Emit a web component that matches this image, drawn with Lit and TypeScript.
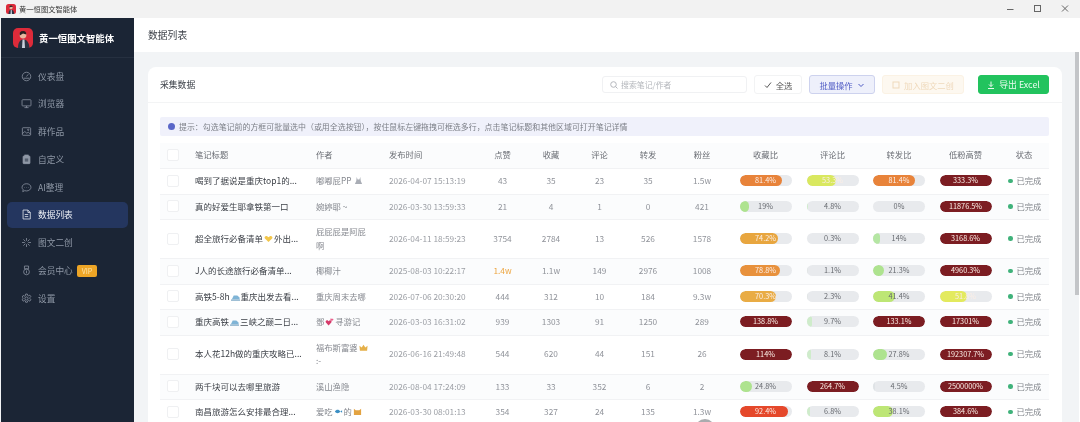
import { LitElement, css, html, svg } from 'lit'
import { customElement } from 'lit/decorators.js'

const ICONS: Record<string, unknown> = {
  gauge: svg`<circle cx="8" cy="8" r="6.2"/><path d="M8 8l2.6-3.2M3.6 10.5h8.8"/>`,
  monitor: svg`<rect x="1.5" y="2.5" width="13" height="9" rx="1"/><path d="M8 11.5v2.5M5 14h6"/>`,
  image: svg`<rect x="2" y="2.5" width="12" height="11" rx="1"/><circle cx="10.5" cy="5.5" r="1"/><path d="M2 11l3.5-3 3 2.500 2-1.500 3.500 3"/>`,
  clip: svg`<rect x="3" y="3" width="10" height="11" rx="1" fill="currentColor"/><rect x="5.500" y="1.500" width="5" height="3" fill="currentColor"/><path d="M5.500 7.500h5M5.500 10h5" stroke="#1b2535"/>`,
  chat: svg`<path d="M8 2.500c3.600 0 6.500 2.300 6.500 5.200S11.600 13 8 13c-.9 0-1.800-.1-2.600-.4L2.500 14l.7-2.800C2 10.200 1.500 9 1.500 7.700 1.500 4.800 4.400 2.500 8 2.500z"/><path d="M5 8h.6M8 8h.6M11 8h.6"/>`,
  doc: svg`<path d="M3 1.500h7l3.500 3.500v9.500H3z"/><path d="M10 1.500V5h3.500M5.500 8h5M5.500 11h5"/>`,
  spark: svg`<path d="M8 1.500v4M8 10.500v4M1.500 8h4M10.500 8h4M3.500 3.500l2.800 2.800M9.700 9.700l2.800 2.800M12.500 3.500L9.700 6.300M6.300 9.700l-2.800 2.800"/>`,
  medal: svg`<path d="M5 1.500h6v4H5z"/><circle cx="8" cy="10" r="4.200"/><path d="M8 8v4"/>`,
  gear: svg`<circle cx="8" cy="8" r="2.300"/><path d="M6.800 1.500h2.400l.4 1.900 1.500.7 1.700-1 1.500 2.200-1.300 1.300v1.800l1.300 1.300-1.500 2.200-1.700-1-1.500.7-.4 1.900H6.800l-.4-1.900-1.500-.7-1.700 1-1.500-2.200 1.300-1.300V7.100L1.700 5.800l1.500-2.200 1.700 1 1.500-.7z"/>`,
}

const NAV = [
  { icon: 'gauge', label: '仪表盘' },
  { icon: 'monitor', label: '浏览器' },
  { icon: 'image', label: '群作品' },
  { icon: 'clip', label: '自定义' },
  { icon: 'chat', label: 'AI整理' },
  { icon: 'doc', label: '数据列表', active: true },
  { icon: 'spark', label: '图文二创' },
  { icon: 'medal', label: '会员中心', vip: true },
  { icon: 'gear', label: '设置' },
]

const emoji = (kind: string) => {
  const shapes: Record<string, unknown> = {
    heart: svg`<path d="M5 9L1 5c-1.200-1.500.8-3.800 2.500-2.500L5 3.500l1.500-1C8.200 1.200 10.200 3.500 9 5z" fill="#f2c64b"/>`,
    pink: svg`<path d="M4 9.500L1 6C0 4.600 1.800 2.800 3.300 4L4 4.700 5 4c1.500-1 3 .8 2 2z" fill="#d63a6a"/><path d="M7.500 4.500L6 3c-.5-.8.600-1.600 1.300-1l.4.300.4-.3c.8-.5 1.600.5 1.100 1.200z" fill="#e8608c"/>`,
    train: svg`<path d="M1 8l2-4h4l2.500 2v2z" fill="#7fb4d6"/><path d="M0 9h10" stroke="#4b88b0"/>`,
    crown: svg`<path d="M1 8.500L.5 3l2.500 2L5 2l2 3 2.500-2L9 8.500z" fill="#e5b04a"/>`,
    fish: svg`<path d="M1 5c1.500-2.500 4.500-2.500 6 0l2-1.500v3L7 5c-1.500 2.500-4.500 2.500-6 0z" fill="#3b8fc4"/>`,
    cat: svg`<path d="M1 2l2 1.500h4L9 2v7H1z" fill="#e3a341"/>`,
    bunny: svg`<path d="M3 1l1 3h2l1-3 .5 4.500L9 9H1l1.500-3.500z" fill="#a9adb5"/>`,
  }
  return html`<svg class="emoji" viewBox="0 0 10 10">${shapes[kind]}</svg>`
}

type Bar = [string, number, string?]

const GREEN = '#aee38f'
const PALE = '#cfeccb'
const LIME = '#bde675'
const RED = '#7c1d22'

const ROWS = [
  { title: html`喝到了据说是重庆top1的...`, author: html`嘟嘟屁PP ${emoji('bunny')}`, time: '2026-04-07 15:13:19', nums: ['43', '35', '23', '35', '1.5w'],
    bars: [['81.4%', 81.4, '#e8833a'], ['53.3%', 57, '#d9e85f'], ['81.4%', 81.4, '#e8833a'], ['333.3%', 100, RED]] as Bar[] },
  { title: html`真的好爱生耶拿铁第一口`, author: html`婉婷耶 ~`, time: '2026-03-30 13:59:33', nums: ['21', '4', '1', '0', '421'],
    bars: [['19%', 19, GREEN], ['4.8%', 3, PALE], ['0%', 0], ['11876.5%', 100, RED]] as Bar[] },
  { title: html`超全旅行必备清单${emoji('heart')}外出...`, author: html`屁屁屁是阿屁啊`, time: '2026-04-11 18:59:23', nums: ['3754', '2784', '13', '526', '1578'],
    bars: [['74.2%', 74.2, '#e8a63f'], ['0.3%', 0], ['14%', 14, '#b5e6a3'], ['3168.6%', 100, RED]] as Bar[] },
  { title: html`J人的长途旅行必备清单...`, author: html`椰椰汁`, time: '2025-08-03 10:22:17', nums: ['1.4w', '1.1w', '149', '2976', '1008'], hot: true,
    bars: [['78.8%', 78.8, '#e8913c'], ['1.1%', 1, '#e2e6e6'], ['21.3%', 21.3, GREEN], ['4960.3%', 100, RED]] as Bar[] },
  { title: html`高铁5-8h${emoji('train')}重庆出发去看...`, author: html`重庆周末去哪`, time: '2026-07-06 20:30:20', nums: ['444', '312', '10', '184', '9.3w'],
    bars: [['70.3%', 70.3, '#e9ac45'], ['2.3%', 2, '#e2e6e6'], ['41.4%', 41.4, LIME], ['51.8%', 52, '#e3ea5e']] as Bar[] },
  { title: html`重庆高铁${emoji('train')}三峡之巅二日...`, author: html`鄧${emoji('pink')}寻游记`, time: '2026-03-03 16:31:02', nums: ['939', '1303', '91', '1250', '289'],
    bars: [['138.8%', 100, RED], ['9.7%', 9.7, PALE], ['133.1%', 100, RED], ['17301%', 100, RED]] as Bar[] },
  { title: html`本人花12h做的重庆攻略已...`, author: html`福布斯富婆${emoji('crown')}<br />:-`, time: '2026-06-16 21:49:48', nums: ['544', '620', '44', '151', '26'],
    bars: [['114%', 100, RED], ['8.1%', 8.1, PALE], ['27.8%', 27.8, GREEN], ['192307.7%', 100, RED]] as Bar[] },
  { title: html`两千块可以去哪里旅游`, author: html`溪山渔隐`, time: '2026-08-04 17:24:09', nums: ['133', '33', '352', '6', '2'],
    bars: [['24.8%', 24.8, GREEN], ['264.7%', 100, RED], ['4.5%', 3, '#dfe3e6'], ['2500000%', 100, RED]] as Bar[] },
  { title: html`南昌旅游怎么安排最合理...`, author: html`爱吃${emoji('fish')}的${emoji('cat')}`, time: '2026-03-30 08:01:13', nums: ['354', '327', '24', '135', '1.3w'],
    bars: [['92.4%', 92.4, '#e5482b'], ['6.8%', 6.8, PALE], ['38.1%', 38.1, LIME], ['384.6%', 100, RED]] as Bar[] },
]

const HEADS = ['点赞', '收藏', '评论', '转发', '粉丝', '收藏比', '评论比', '转发比', '低粉高赞']

@customElement('app-root')
export class AppRoot extends LitElement {
  static styles = css`
    :host {
      display: block;
      width: 1080px;
      height: 422px;
      overflow: hidden;
      position: relative;
      font-family: 'Noto Sans CJK SC', 'Noto Sans', sans-serif;
      background: #f2f4f6;
      /* the reference is a soft, upscaled capture */
      filter: blur(0.35px);
      --cols: 27px 121px 73px 97px 49px 48px 49px 48px 60px 67px 67px 66px 67px 50px;
    }

    .titlebar {
      height: 18px;
      background: #f2f2f2;
      display: flex;
      align-items: center;
      padding: 0 0 0 6px;
      font-size: 7.300px;
      color: #333;
      gap: 3px;
    }
    .titlebar svg.tlogo {
      width: 10px;
      height: 10px;
    }
    .winbtns {
      margin-left: auto;
      display: flex;
    }
    .winbtns svg {
      width: 27px;
      height: 18px;
      fill: none;
      stroke: #666;
    }

    .shell {
      display: flex;
      height: 404px;
    }

    .side {
      width: 133px;
      margin-left: 1px;
      background: #1b2535;
      flex: none;
    }
    .brand {
      height: 39px;
      display: flex;
      align-items: center;
      gap: 6px;
      padding-left: 12px;
      border-bottom: 1px solid #263040;
      color: #fff;
      font-size: 9.400px;
      font-weight: 700;
    }
    .brand svg {
      width: 20px;
      height: 20px;
    }
    nav {
      padding: 5px 6px 0 6px;
      display: flex;
      flex-direction: column;
    }
    .item {
      height: 26px;
      margin-bottom: 1.800px;
      display: flex;
      align-items: center;
      gap: 6px;
      padding-left: 14px;
      border-radius: 5px;
      color: #8f98a6;
      font-size: 8.700px;
    }
    .item.active {
      background: #24365f;
      color: #eef1f6;
    }
    .item svg {
      width: 11px;
      height: 11px;
      fill: none;
      stroke: currentColor;
      stroke-width: 1.100;
      flex: none;
    }
    .vip {
      background: #eda526;
      color: #fde3a8;
      font-size: 7px;
      line-height: 12px;
      padding: 0 5px;
      border-radius: 2px;
      margin-left: -2px;
    }

    .main {
      flex: 1;
      min-width: 0;
      display: flex;
      flex-direction: column;
    }
    .pagehead {
      height: 34px;
      flex: none;
      background: #fff;
      display: flex;
      align-items: center;
      padding-left: 14px;
      font-size: 9.800px;
      color: #3c4048;
    }
    .body {
      flex: 1;
      display: flex;
      min-height: 0;
    }
    .content {
      flex: 1;
      min-width: 0;
      padding: 15px 11px 0 14px;
    }
    .scroll {
      width: 7px;
      box-sizing: border-box;
      border-right: 1px solid #fff;
      flex: none;
      display: flex;
      justify-content: flex-end;
    }
    .scroll i {
      display: block;
      width: 4px;
      height: 243px;
      background: #c3c5c8;
    }

    .card {
      background: #fff;
      border-radius: 8px 8px 0 0;
      height: 400px;
    }
    .cardhead {
      height: 36px;
      display: flex;
      align-items: center;
      padding: 0 13px 0 12px;
      border-bottom: 1px solid #f3f4f5;
      box-sizing: border-box;
      font-size: 8.800px;
      color: #3c4048;
    }
    .cardhead .gap {
      flex: 1;
    }
    .search {
      width: 145px;
      height: 17px;
      box-sizing: border-box;
      border: 1px solid #f0f1f3;
      border-radius: 3px;
      display: flex;
      align-items: center;
      gap: 3px;
      padding-left: 7px;
      color: #b4b7bc;
      font-size: 7.900px;
      margin-right: 7px;
    }
    .search svg,
    .btn svg {
      width: 8px;
      height: 8px;
      fill: none;
      stroke: currentColor;
      flex: none;
    }
    .btn {
      height: 19px;
      box-sizing: border-box;
      border-radius: 3px;
      display: flex;
      align-items: center;
      justify-content: center;
      gap: 4px;
      font-size: 8.300px;
      border: 1px solid #f2f3f4;
      color: #555;
    }
    .btn.all {
      width: 48px;
      margin-right: 7px;
    }
    .btn.batch {
      width: 66px;
      margin-right: 7px;
      background: #eef0fb;
      border-color: #cdd2ee;
      color: #4f5bc4;
    }
    .btn.add {
      width: 82px;
      margin-right: 14px;
      background: #fdf8f0;
      border-color: #fbf2e4;
      color: #efd9bb;
    }
    .btn.export {
      width: 71px;
      background: #22c35e;
      border-color: #22c35e;
      color: #e9fbef;
      font-size: 8.900px;
    }

    .hint {
      margin: 14px 13px 7px 12px;
      height: 19px;
      background: #f0f1fb;
      border-radius: 2px;
      display: flex;
      align-items: center;
      gap: 4px;
      padding-left: 8px;
      font-size: 7.950px;
      color: #7d8088;
      white-space: nowrap;
    }
    .hint b {
      width: 7px;
      height: 7px;
      border-radius: 50%;
      background: #5a67c8;
      flex: none;
    }

    .table {
      margin: 0 13px 0 12px;
    }
    .row {
      display: grid;
      grid-template-columns: var(--cols);
      align-items: center;
      padding: 5px 0 6px;
      line-height: 13.500px;
      border-bottom: 1px solid #f1f2f4;
      font-size: 8.300px;
      color: #90939a;
      text-align: center;
    }
    .row:nth-child(odd) {
      background: #fbfcfd;
    }
    .row.head {
      background: #fbfcfd;
      height: 26px;
      box-sizing: border-box;
      color: #6a6d74;
    }
    .left {
      text-align: left;
      padding-left: 8px;
    }
    .title {
      color: #3b3f46;
      font-size: 8.500px;
      white-space: nowrap;
    }
    .row.head .title {
      color: #6a6d74;
      font-size: 8.300px;
    }
    .author {
      color: #85888f;
      padding-right: 10px;
    }
    .time {
      color: #9c9fa5;
      white-space: nowrap;
    }
    .hot {
      color: #eda53f;
    }
    .check {
      width: 12px;
      height: 12px;
      box-sizing: border-box;
      border: 1px solid #eff0f2;
      border-radius: 2px;
      margin-left: 7px;
      background: #fff;
    }
    .emoji {
      display: inline-block;
      width: 9px;
      height: 9px;
      margin: 0 1px;
      vertical-align: -1px;
    }
    .bar {
      width: 52px;
      height: 11px;
      border-radius: 6px;
      background: #e8eaed;
      margin: 0 auto;
      position: relative;
      overflow: hidden;
      font-size: 7.300px;
      line-height: 11px;
      color: #676a70;
    }
    .bar i {
      position: absolute;
      inset: 0 auto 0 0;
      border-radius: 6px;
    }
    .bar span {
      position: relative;
    }
    .bar.on span {
      color: #fbeee6;
    }
    .status {
      display: flex;
      align-items: center;
      gap: 4px;
      padding-left: 9px;
      color: #80848a;
      font-size: 8.300px;
      white-space: nowrap;
    }
    .status i {
      width: 4.500px;
      height: 4.500px;
      border-radius: 50%;
      background: #3fb27a;
    }
    .spinner {
      position: absolute;
      left: 695px;
      top: 419px;
      width: 20px;
      height: 20px;
      border-radius: 50%;
      background: #a9abae;
    }
  `

  private logo(cls = '') {
    return html`<svg class=${cls} viewBox="0 0 20 20">
      <rect width="20" height="20" rx="5" fill="#dd2b3a" />
      <circle cx="10" cy="7" r="3.400" fill="#e9b9a0" />
      <path d="M10 5.500L6.800 7.500C6 3.500 8.500 3 10.500 3s3 1.500 2.800 3.500z" fill="#2a2020" />
      <path d="M5 20c0-5.500 2-8.500 5.500-8.500s5.500 3 6 8.500z" fill="#2c3342" />
      <path d="M9.500 11.500h2l.5 8.500H9z" fill="#c9d0dc" />
    </svg>`
  }

  private renderBar([label, width, color]: Bar) {
    return html`<div class="bar ${width >= 50 ? 'on' : ''}">
      ${width ? html`<i style="width:${width}%;background:${color}"></i>` : ''}
      <span>${label}</span>
    </div>`
  }

  render() {
    return html`
      <div class="titlebar">
        ${this.logo('tlogo')}
        <span>黄一恒图文智能体</span>
        <div class="winbtns">
          <svg viewBox="0 0 27 18"><path d="M8 9.500h6.500" /></svg>
          <svg viewBox="0 0 27 18"><rect x="8.500" y="5.500" width="6" height="6" /></svg>
          <svg viewBox="0 0 27 18"><path d="M9 5.500l6 6M15 5.500l-6 6" /></svg>
        </div>
      </div>
      <div class="shell">
        <aside class="side">
          <div class="brand">${this.logo()}<span>黄一恒图文智能体</span></div>
          <nav>
            ${NAV.map(n => html`
              <div class="item ${n.active ? 'active' : ''}">
                <svg viewBox="0 0 16 16">${ICONS[n.icon]}</svg>
                <span>${n.label}</span>
                ${n.vip ? html`<span class="vip">VIP</span>` : ''}
              </div>
            `)}
          </nav>
        </aside>
        <div class="main">
          <div class="pagehead">数据列表</div>
          <div class="body">
            <div class="content">
              <section class="card">
                <div class="cardhead">
                  <span>采集数据</span>
                  <span class="gap"></span>
                  <div class="search">
                    <svg viewBox="0 0 8 8"><circle cx="3.500" cy="3.500" r="2.800" /><path d="M5.500 5.500L7.500 7.500" /></svg>
                    搜索笔记/作者
                  </div>
                  <div class="btn all">
                    <svg viewBox="0 0 8 8"><path d="M1 4.500l2 2 4-5" /></svg>全选
                  </div>
                  <div class="btn batch">
                    批量操作
                    <svg viewBox="0 0 8 8"><path d="M1.500 3l2.500 2.500L6.500 3" /></svg>
                  </div>
                  <div class="btn add">
                    <svg viewBox="0 0 8 8"><rect x="1" y="1" width="6" height="6" /></svg>加入图文二创
                  </div>
                  <div class="btn export">
                    <svg viewBox="0 0 8 8"><path d="M4 .5v5M2 3.500l2 2 2-2M1 7.500h6" /></svg>导出 Excel
                  </div>
                </div>
                <div class="hint">
                  <b></b>
                  <span>提示：勾选笔记前的方框可批量选中（或用全选按钮），按住鼠标左键拖拽可框选多行，点击笔记标题和其他区域可打开笔记详情</span>
                </div>
                <div class="table">
                  <div class="row head">
                    <div class="check"></div>
                    <div class="left title">笔记标题</div>
                    <div class="left">作者</div>
                    <div class="left">发布时间</div>
                    ${HEADS.map(h => html`<div>${h}</div>`)}
                    <div>状态</div>
                  </div>
                  ${ROWS.map(r => html`
                    <div class="row">
                      <div class="check"></div>
                      <div class="left title">${r.title}</div>
                      <div class="left author">${r.author}</div>
                      <div class="left time">${r.time}</div>
                      ${r.nums.map((n, i) => html`<div class="${r.hot && i === 0 ? 'hot' : ''}">${n}</div>`)}
                      ${r.bars.map(b => this.renderBar(b))}
                      <div class="status"><i></i>已完成</div>
                    </div>
                  `)}
                </div>
              </section>
            </div>
            <div class="scroll"><i></i></div>
          </div>
        </div>
      </div>
      <div class="spinner"></div>
    `
  }
}
